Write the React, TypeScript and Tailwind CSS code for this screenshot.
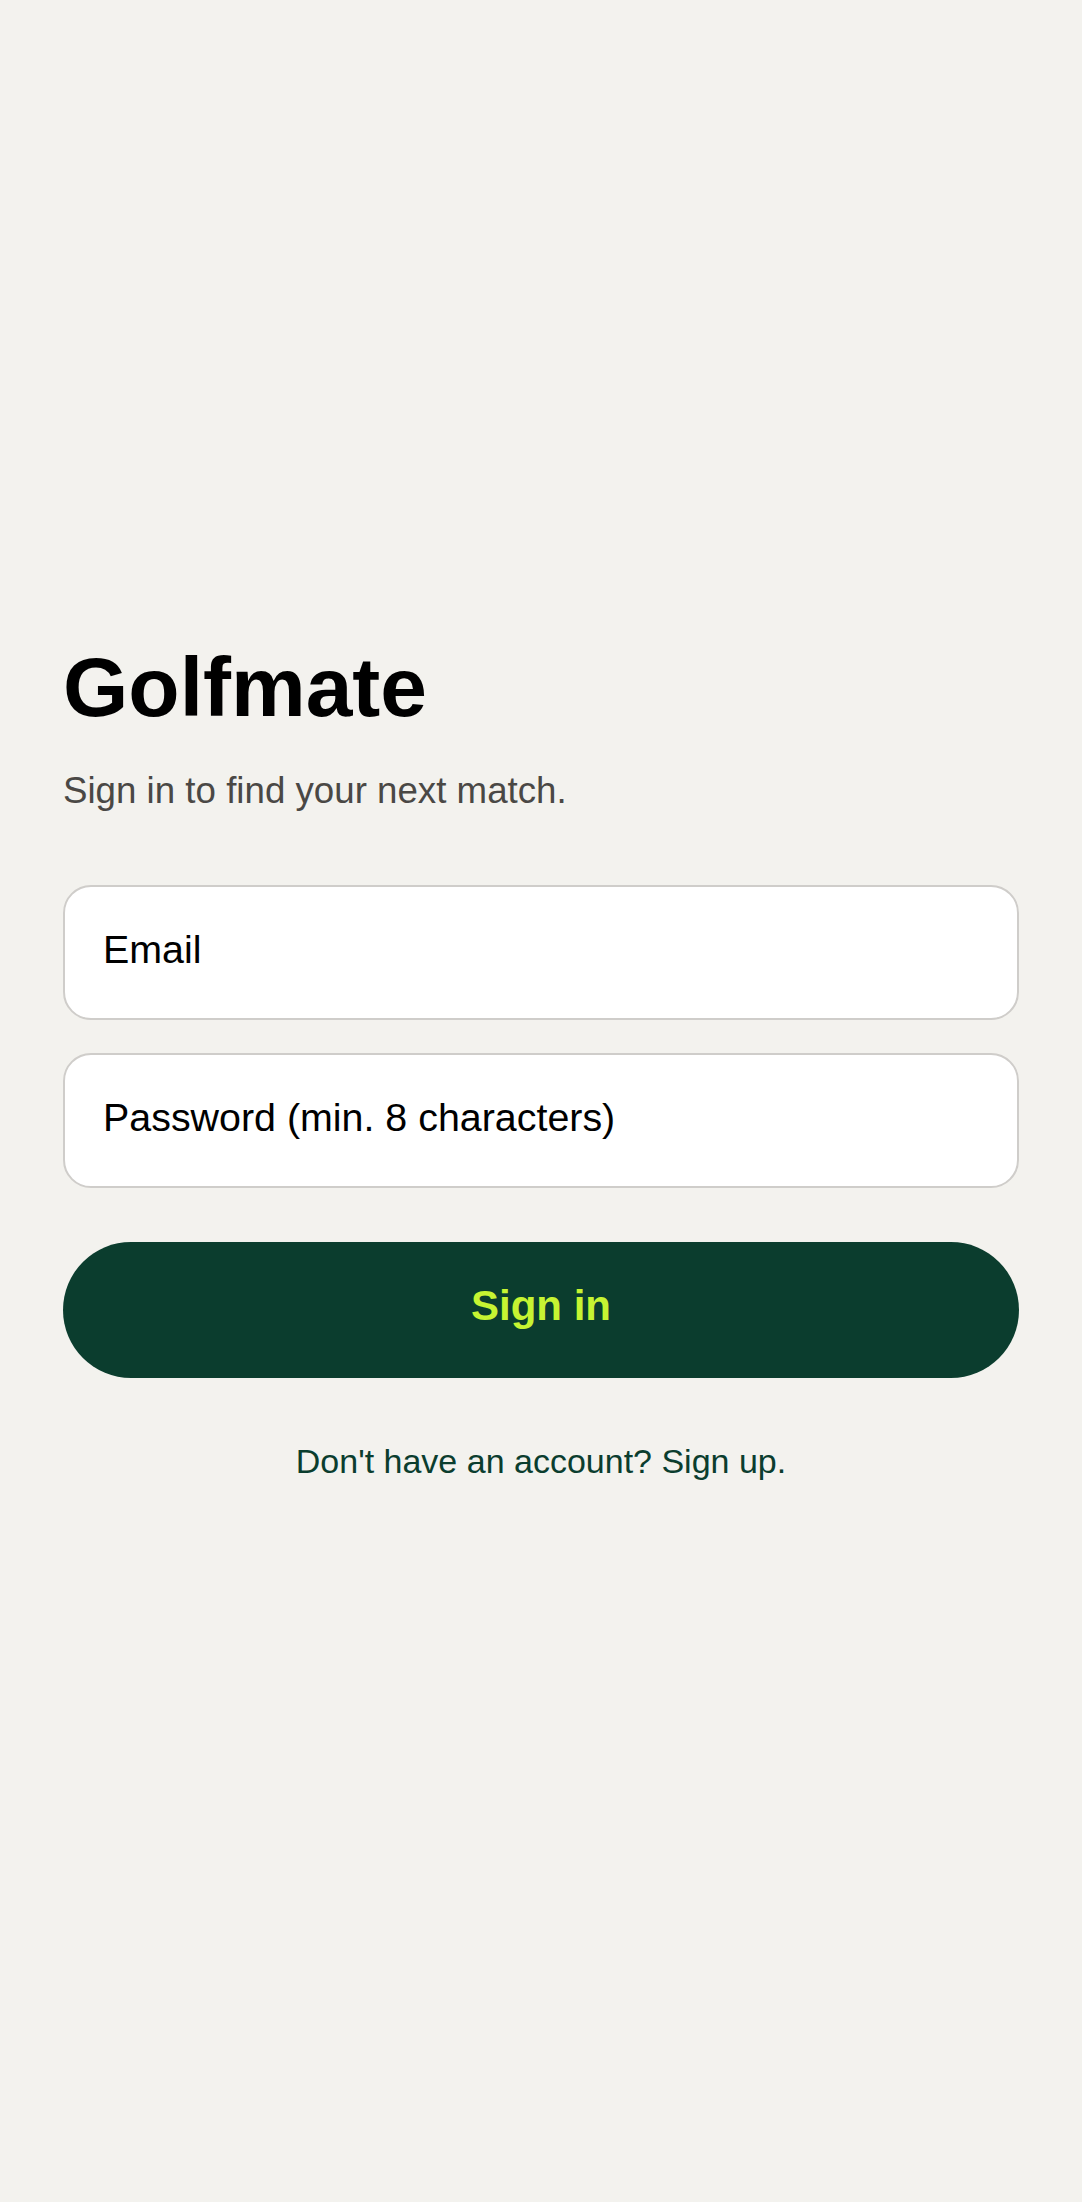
import React from 'react';

export default function App() {
  return (
    <div
      className="min-h-[2202px] bg-[#f3f2ee] flex flex-col justify-center px-[63px] pb-[76px]"
      style={{ fontFamily: '"Liberation Sans", Arial, sans-serif' }}
    >
      <h1 className="text-[84px] leading-[84px] font-bold text-black">Golfmate</h1>
      <p className="mt-[40px] text-[36.7px] leading-[43px] text-[#4a4845]">Sign in to find your next match.</p>

      <form className="mt-[73px] flex flex-col" onSubmit={e => e.preventDefault()}>
        <input
          type="email"
          placeholder="Email"
          className="h-[135px] rounded-[28px] border-2 border-[#cfcdca] bg-white px-[38px] pb-[5px] text-[39.4px] text-black placeholder:text-black outline-none"
        />
        <input
          type="password"
          placeholder="Password (min. 8 characters)"
          className="mt-[33px] h-[135px] rounded-[28px] border-2 border-[#cfcdca] bg-white px-[38px] pb-[5px] text-[39.4px] text-black placeholder:text-black outline-none"
        />
        <button
          type="submit"
          className="mt-[54px] h-[136px] rounded-full bg-[#0b3d2e] pb-[8px] text-[42px] font-bold text-[#c6f432]"
        >
          Sign in
        </button>
      </form>

      <p className="mt-[63px] text-center text-[34px] leading-[41px] text-[#0b3d2e]">
        Don't have an account? Sign up.
      </p>
    </div>
  );
}
